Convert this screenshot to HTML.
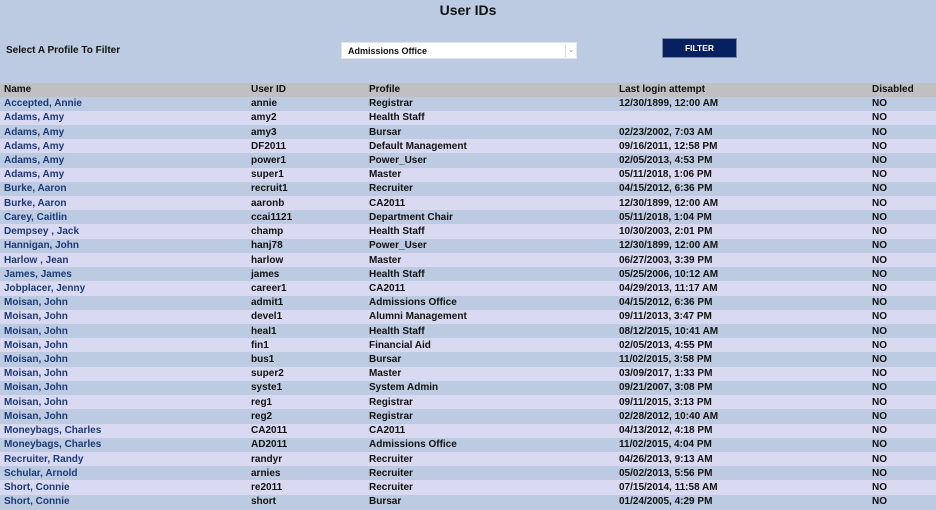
<!DOCTYPE html>
<html><head><style>
body{margin:0;width:936px;height:510px;background:#bccbe1;font-family:"Liberation Sans",Arial,sans-serif;font-weight:bold;font-size:10px;color:#111;overflow:hidden;position:relative}
h1{position:absolute;top:2px;left:0;width:936px;text-align:center;margin:0;font-size:14px;color:#111}
.lbl{position:absolute;left:6px;top:45px;font-size:10px}
.sel{position:absolute;left:341px;top:42px;width:236px;height:17px;background:#fff;border:1px solid #e4e4e4;box-sizing:border-box;font-size:9px;line-height:16px;padding-left:6px}
.sel span{position:absolute;right:0;top:2px;width:10px;height:12px;border-left:1px solid #ddd;color:#aaa;font-size:7px;line-height:12px;text-align:center}
.btn{position:absolute;left:662px;top:38px;width:75px;height:20px;background:#062060;border:1px solid #7a86a6;box-sizing:border-box;color:#fff;font-size:8.5px;text-align:center;line-height:18px}
table{position:absolute;top:83px;left:0;width:936px;border-collapse:collapse}
td,th{padding:0 0 0 4px;height:14.22px;line-height:13px;text-align:left;white-space:nowrap;font-size:10px}
th{background:#c0c0c0;height:13.5px}
tr:nth-child(odd) td{background:#d9d9f2}
td:first-child{color:#1c3a78}
</style></head><body>
<h1>User IDs</h1>
<div class="lbl">Select A Profile To Filter</div>
<div class="sel">Admissions Office<span>⌄</span></div>
<div class="btn">FILTER</div>
<table>
<colgroup><col style="width:247px"><col style="width:118px"><col style="width:250px"><col style="width:253px"><col></colgroup>
<tr><th>Name</th><th>User ID</th><th>Profile</th><th>Last login attempt</th><th>Disabled</th></tr>
<tr><td>Accepted, Annie</td><td>annie</td><td>Registrar</td><td>12/30/1899, 12:00 AM</td><td>NO</td></tr>
<tr><td>Adams, Amy</td><td>amy2</td><td>Health Staff</td><td></td><td>NO</td></tr>
<tr><td>Adams, Amy</td><td>amy3</td><td>Bursar</td><td>02/23/2002, 7:03 AM</td><td>NO</td></tr>
<tr><td>Adams, Amy</td><td>DF2011</td><td>Default Management</td><td>09/16/2011, 12:58 PM</td><td>NO</td></tr>
<tr><td>Adams, Amy</td><td>power1</td><td>Power_User</td><td>02/05/2013, 4:53 PM</td><td>NO</td></tr>
<tr><td>Adams, Amy</td><td>super1</td><td>Master</td><td>05/11/2018, 1:06 PM</td><td>NO</td></tr>
<tr><td>Burke, Aaron</td><td>recruit1</td><td>Recruiter</td><td>04/15/2012, 6:36 PM</td><td>NO</td></tr>
<tr><td>Burke, Aaron</td><td>aaronb</td><td>CA2011</td><td>12/30/1899, 12:00 AM</td><td>NO</td></tr>
<tr><td>Carey, Caitlin</td><td>ccai1121</td><td>Department Chair</td><td>05/11/2018, 1:04 PM</td><td>NO</td></tr>
<tr><td>Dempsey , Jack</td><td>champ</td><td>Health Staff</td><td>10/30/2003, 2:01 PM</td><td>NO</td></tr>
<tr><td>Hannigan, John</td><td>hanj78</td><td>Power_User</td><td>12/30/1899, 12:00 AM</td><td>NO</td></tr>
<tr><td>Harlow , Jean</td><td>harlow</td><td>Master</td><td>06/27/2003, 3:39 PM</td><td>NO</td></tr>
<tr><td>James, James</td><td>james</td><td>Health Staff</td><td>05/25/2006, 10:12 AM</td><td>NO</td></tr>
<tr><td>Jobplacer, Jenny</td><td>career1</td><td>CA2011</td><td>04/29/2013, 11:17 AM</td><td>NO</td></tr>
<tr><td>Moisan, John</td><td>admit1</td><td>Admissions Office</td><td>04/15/2012, 6:36 PM</td><td>NO</td></tr>
<tr><td>Moisan, John</td><td>devel1</td><td>Alumni Management</td><td>09/11/2013, 3:47 PM</td><td>NO</td></tr>
<tr><td>Moisan, John</td><td>heal1</td><td>Health Staff</td><td>08/12/2015, 10:41 AM</td><td>NO</td></tr>
<tr><td>Moisan, John</td><td>fin1</td><td>Financial Aid</td><td>02/05/2013, 4:55 PM</td><td>NO</td></tr>
<tr><td>Moisan, John</td><td>bus1</td><td>Bursar</td><td>11/02/2015, 3:58 PM</td><td>NO</td></tr>
<tr><td>Moisan, John</td><td>super2</td><td>Master</td><td>03/09/2017, 1:33 PM</td><td>NO</td></tr>
<tr><td>Moisan, John</td><td>syste1</td><td>System Admin</td><td>09/21/2007, 3:08 PM</td><td>NO</td></tr>
<tr><td>Moisan, John</td><td>reg1</td><td>Registrar</td><td>09/11/2015, 3:13 PM</td><td>NO</td></tr>
<tr><td>Moisan, John</td><td>reg2</td><td>Registrar</td><td>02/28/2012, 10:40 AM</td><td>NO</td></tr>
<tr><td>Moneybags, Charles</td><td>CA2011</td><td>CA2011</td><td>04/13/2012, 4:18 PM</td><td>NO</td></tr>
<tr><td>Moneybags, Charles</td><td>AD2011</td><td>Admissions Office</td><td>11/02/2015, 4:04 PM</td><td>NO</td></tr>
<tr><td>Recruiter, Randy</td><td>randyr</td><td>Recruiter</td><td>04/26/2013, 9:13 AM</td><td>NO</td></tr>
<tr><td>Schular, Arnold</td><td>arnies</td><td>Recruiter</td><td>05/02/2013, 5:56 PM</td><td>NO</td></tr>
<tr><td>Short, Connie</td><td>re2011</td><td>Recruiter</td><td>07/15/2014, 11:58 AM</td><td>NO</td></tr>
<tr><td>Short, Connie</td><td>short</td><td>Bursar</td><td>01/24/2005, 4:29 PM</td><td>NO</td></tr>
</table>
</body></html>
